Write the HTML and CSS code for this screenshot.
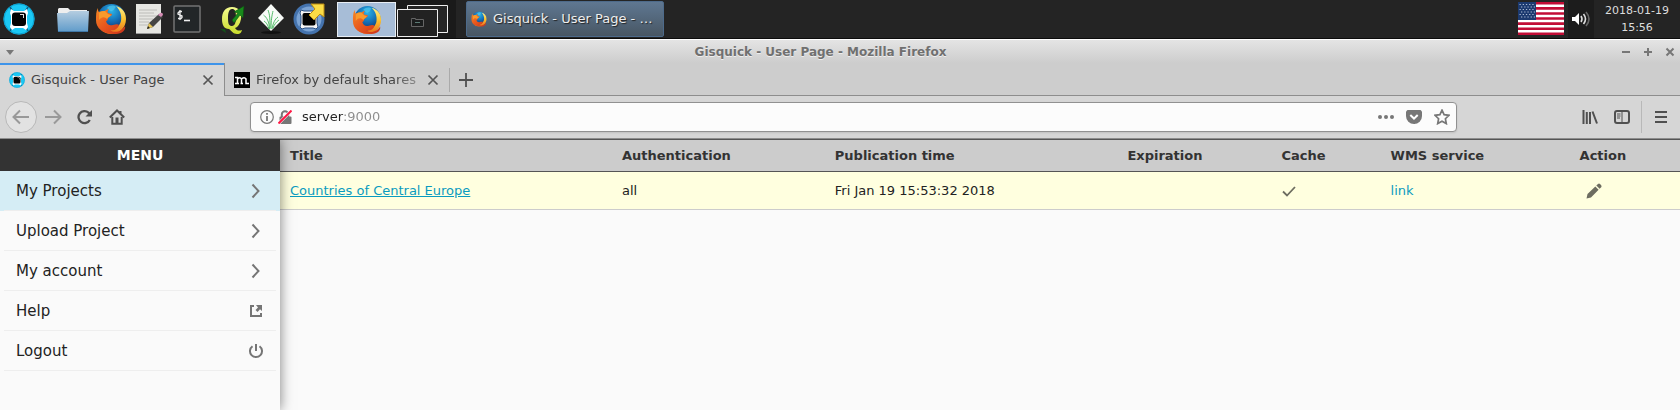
FILE: index.html
```html
<!DOCTYPE html>
<html lang="en">
<head>
<meta charset="utf-8">
<title>Gisquick - User Page</title>
<link rel="stylesheet" href="styles.css">
</head>
<body>
<svg class="defs" width="0" height="0" aria-hidden="true">
  <defs>
    <radialGradient id="globe" cx="0.5" cy="0.25" r="0.7"><stop offset="0" stop-color="#2cb4e6"/><stop offset="0.5" stop-color="#1672b8"/><stop offset="1" stop-color="#0d2f6b"/></radialGradient>
    <linearGradient id="fox" x1="0" y1="0" x2="1" y2="1"><stop offset="0" stop-color="#f58a25"/><stop offset="0.5" stop-color="#e8561d"/><stop offset="1" stop-color="#c8321b"/></linearGradient>
    <linearGradient id="tail" x1="0" y1="0" x2="0" y2="1"><stop offset="0" stop-color="#fff08a"/><stop offset="0.5" stop-color="#fbc02c"/><stop offset="1" stop-color="#ea6a1c"/></linearGradient>
    <linearGradient id="folder" x1="0" y1="0" x2="0" y2="1"><stop offset="0" stop-color="#b5cde0"/><stop offset="1" stop-color="#5f9bca"/></linearGradient>
    <linearGradient id="quill" x1="0" y1="0" x2="0" y2="1"><stop offset="0" stop-color="#f4fb8e"/><stop offset="1" stop-color="#c8dc2c"/></linearGradient>
  </defs>
  <symbol id="firefox" viewBox="0 0 32 32">
    <circle cx="16.500" cy="15" r="14" fill="url(#globe)"/>
    <path d="M12 5c3-3 7-3 9-1-2 1-1 3-4 4s-3-2-5-3z" fill="#4fc8ec" opacity=".7"/>
    <path d="M21 3c7 2 10 7 10 13 0 9-7 15-15 15-4 0-8-2-10-4 9 2 18-1 20-9 1-6-1-11-5-15z" fill="url(#tail)"/>
    <path d="M3 5c0 2 0 3 1 4 2-1 4-1 6-1 1-1 3-2 4-2-1 1-2 3-1 4l4 1c0 2-2 2-4 4 0 2-1 3-2 3 1 4 4 5 7 4s5-1 6 0c-1 4-5 6-9 5 5 4 12 1 15-4 1 4-3 8-9 8C7 31 1 25 1 17c0-5 0-9 2-12z" fill="url(#fox)"/>
    <path d="M4 10c2-2 4-2 6-2l3 3 3 1c-1 2-3 2-4 4-2-2-5-3-8 1z" fill="#f99a2b"/>
  </symbol>
  <symbol id="gisquick" viewBox="0 0 32 32">
    <circle cx="16" cy="16" r="15.500" fill="#1bc9f5"/>
    <circle cx="16" cy="16" r="15" fill="none" stroke="#0a9fd0"/>
    <path d="M7 4l3 5M25 4l-3 5M7 28l3-5M25 28l-3-5" stroke="#0a5f86" stroke-width="1.500"/>
    <path d="M8 6l3 2h10l3-2 1 4-1 3v7l1 4-2 3-3-2H12l-3 2-2-3 1-4v-7l-1-3z" fill="#fff"/>
    <rect x="9" y="9.500" width="14" height="13.500" rx="3" fill="#030303"/>
    <path d="M17 11h4v1h-4zM20 12h1v3h-1z" fill="#ddd"/>
  </symbol>
  <symbol id="close" viewBox="0 0 12 12"><path d="M1.500 1.500l9 9M10.500 1.500l-9 9" stroke="#555" stroke-width="1.700" fill="none"/></symbol>
  <symbol id="chevron" viewBox="0 0 16 16"><path d="M4.500 1.500l6 6.500-6 6.500" stroke="#757575" stroke-width="2" fill="none"/></symbol>
</svg>

<header class="panel">
  <button class="launcher" aria-label="Applications"><svg width="32" height="32"><use href="#gisquick"/></svg></button>
  <span class="gap wide"></span>
  <button class="launcher" aria-label="Files"><svg width="32" height="32" viewBox="0 0 32 32"><path d="M1 10V6l1-1h9l2 2h17v4z" fill="#eee"/><path d="M0 10h10l3-2h19l-1 21H1z" fill="url(#folder)"/><path d="M1 28.500h30" stroke="#3f78a8"/></svg></button>
  <button class="launcher" aria-label="Firefox"><svg width="32" height="32"><use href="#firefox"/></svg></button>
  <button class="launcher" aria-label="Text editor"><svg width="28" height="32" viewBox="0 0 28 32"><path d="M1 1h25v30H1z" fill="#e6e6e2"/><path d="M4 7h18M4 10h15M4 13h18M4 16h14M4 19h10M4 22h9" stroke="#bcbcb8"/><path d="M1 30.500h25" stroke="#999"/><path d="M12 26l2-6 10-9 4 3-10 10z" fill="#454545"/><path d="M12 26l2-6 4 4z" fill="#e7c75a"/><path d="M12 26l1-3 2 2z" fill="#222"/><path d="M23 12l2-2q3-1 3 2l-2 2z" fill="#d58cb5"/></svg></button>
  <button class="launcher" aria-label="Terminal"><svg width="28" height="28" viewBox="0 0 28 28"><rect x="1" y="1" width="26" height="26" rx="1" fill="#222628" stroke="#737373" stroke-width="1.500"/><path d="M9 6.500H6.500L5 8v1l4 2v1.500L8 13.500H5M7 5v10" fill="none" stroke="#eee" stroke-width="1.300"/><path d="M11 15.500h6" stroke="#eee" stroke-width="1.600"/></svg></button>
  <span class="gap"></span>
  <button class="launcher" aria-label="QGIS"><svg width="28" height="32" viewBox="0 0 28 32"><path fill-rule="evenodd" d="M13 4c7 0 10 5 9 12-1 5-3 8-6 9 2 3 4 3 7 2-1 4-3 4-5 4-4 0-5-3-8-5-5 0-7-4-7-10C3 9 6 4 13 4zm0 2c-3 0-4 4-4 9 0 6 1 8 4 8s4-4 4-9c0-6-1-8-4-8z" fill="url(#quill)"/><path d="M1 26l5 0 1 4-3-2z" fill="#14501a"/><path d="M13 17l6-7-4-1 10-6-1 12-3-3-6 8z" fill="#188a1b" stroke="#0b4d10" stroke-width=".6"/></svg></button>
  <button class="launcher" aria-label="GRASS GIS"><svg width="28" height="32" viewBox="0 0 28 32"><ellipse cx="14" cy="29.500" rx="10" ry="1.500" fill="#111"/><path d="M14 1l13 14-13 13L1 15z" fill="#f8fbf8"/><path d="M12.500 26c0-7-3-12-6-14M13 25c0-8 0-13-2-18M14 26c0-9 1-14 2-18M15 26c1-6 3-10 6-12M16 25c1-3 3-6 6-8M12 26c-1-4-3-7-5-8" stroke="#45b45c" stroke-width=".9" fill="none"/></svg></button>
  <button class="launcher" aria-label="Gisquick export"><svg width="32" height="32" viewBox="0 0 32 32"><circle cx="16" cy="16" r="15.500" fill="#4473ae"/><circle cx="16" cy="16" r="12.500" fill="#7aa3d4"/><path d="M8 7l3 1h10l3-1 1 3-1 3v7l1 4-2 2-3-1h-8l-3 1-2-2 1-4v-7l-1-3z" fill="#f6f6f6" stroke="#284d80" stroke-width="1"/><rect x="9.500" y="10" width="13" height="12.500" rx="2" fill="#030303"/><path d="M18 1h13v13l-4-3-6 6-5-5 6-6z" fill="#fbdc46" stroke="#b98b12"/></svg></button>
  <span class="gap"></span>
  <div class="pager">
    <button class="workspace current" aria-label="Workspace 1"><svg width="30" height="32"><use href="#firefox"/></svg></button>
    <button class="workspace" aria-label="Workspace 2"><svg width="58" height="36" viewBox="0 0 58 36"><path d="M11.500 3.500h40v27h-40z" fill="#252525" stroke="#eee"/><path d="M1.500 7.500h40v27h-40z" fill="#222" stroke="#eee"/><path d="M15.500 17.500v-1h4v1h8v7h-12z" fill="#1b1d1d" stroke="#666"/><path d="M19 20.500h5" stroke="#5b7a74"/></svg></button>
  </div>
  <button class="task"><svg width="16" height="16"><use href="#firefox"/></svg><span>Gisquick - User Page - …</span></button>
  <span class="fill"></span>
  <button class="flag" aria-label="Keyboard layout: US"><svg width="46" height="33" viewBox="0 0 46 33"><path fill="#fff" d="M0 0h46v33H0z"/><path d="M0 1.300h46M0 6.400h46M0 11.500h46M0 16.500h46M0 21.600h46M0 26.700h46M0 31.700h46" stroke="#c20d36" stroke-width="2.600"/><path fill="#1c3a70" d="M0 0h18v18H0z"/><path d="M1.500 2.500h16M3 5h14M1.500 7.500h16M3 10h14M1.500 12.500h16M3 15h14" stroke="#a9b9d2" stroke-width="1.100" stroke-dasharray="1.300 1.900"/></svg></button>
  <button class="volume" aria-label="Volume"><svg width="20" height="18" viewBox="0 0 20 18"><path d="M1 7h3l4-4v12l-4-4H1z" fill="#fff"/><path d="M10 6q2 3 0 6M12.500 4q4 5 0 10" stroke="#ddd" stroke-width="1.600" fill="none"/><path d="M15 2q6 7 0 14" stroke="#666" stroke-width="1.600" fill="none"/></svg></button>
  <time class="clock" datetime="2018-01-19T15:56"><span>2018-01-19</span><span>15:56</span></time>
</header>

<div class="titlebar">
  <button class="winmenu" aria-label="Window menu"><svg width="8" height="5" viewBox="0 0 8 5"><path d="M0 0h8L4 5z" fill="#777"/></svg></button>
  <h1>Gisquick - User Page - Mozilla Firefox</h1>
  <div class="winbuttons">
    <button aria-label="Minimize"><svg width="10" height="10" viewBox="0 0 10 10"><path d="M1 5h8" stroke="#777" stroke-width="2"/></svg></button>
    <button aria-label="Maximize"><svg width="10" height="10" viewBox="0 0 10 10"><path d="M1 5h8M5 1v8" stroke="#777" stroke-width="2"/></svg></button>
    <button aria-label="Close window"><svg width="10" height="10" viewBox="0 0 10 10"><path d="M1.500 1.500l7 7M8.500 1.500l-7 7" stroke="#777" stroke-width="2"/></svg></button>
  </div>
</div>

<div class="tabs">
  <div class="tab active"><svg width="16" height="16"><use href="#gisquick"/></svg><span class="tab-label">Gisquick - User Page</span><button aria-label="Close tab"><svg width="12" height="12"><use href="#close"/></svg></button></div>
  <div class="tab"><svg width="16" height="16" viewBox="0 0 16 16"><path d="M0 0h16v16H0z"/><path d="M1 5.500h2.500v5.500M1 11.500h4M3.500 7q2.500-2.500 4 0v4M6.500 11.500H9M7.500 7q3-2.500 4.500 0v4.500h3" fill="none" stroke="#fff" stroke-width="1.500"/></svg><span class="tab-label fade">Firefox by default shares</span><button aria-label="Close tab"><svg width="12" height="12"><use href="#close"/></svg></button></div>
  <div class="newtab"><button aria-label="New tab"><svg width="14" height="14" viewBox="0 0 14 14"><path d="M0 7h14M7 0v14" stroke="#505050" stroke-width="1.800"/></svg></button></div>
</div>

<nav class="toolbar">
  <button class="back" aria-label="Back"><svg width="18" height="16" viewBox="0 0 18 16"><path d="M17 8H2M8 1.500L1.500 8 8 14.500" fill="none" stroke="#999" stroke-width="2"/></svg></button>
  <button class="tool" aria-label="Forward"><svg width="18" height="16" viewBox="0 0 18 16"><path d="M1 8h15M10 1.500L16.500 8 10 14.500" fill="none" stroke="#999" stroke-width="2"/></svg></button>
  <button class="tool" aria-label="Reload"><svg width="16" height="16" viewBox="0 0 16 16"><path d="M12.800 11A6 6 0 1 1 11.500 3.600L13.500 5.500" fill="none" stroke="#505050" stroke-width="2.300"/><path d="M15 1v6.500H8.500z" fill="#505050"/></svg></button>
  <button class="tool" aria-label="Home"><svg width="16" height="16" viewBox="0 0 16 16"><path d="M.8 8.500L8 1.500l7.200 7M11.500 2v3" fill="none" stroke="#505050" stroke-width="2"/><path d="M3.300 8v6.700h9.400V8" fill="none" stroke="#505050" stroke-width="2"/><path d="M6.500 14V8.500h3V14" fill="#505050"/></svg></button>
  <span class="spring"></span>
  <div class="urlbar">
    <svg width="14" height="14" viewBox="0 0 14 14"><circle cx="7" cy="7" r="6.300" fill="none" stroke="#777" stroke-width="1.200"/><path d="M7 6v5M7 3v1.800" stroke="#777" stroke-width="1.800"/></svg>
    <svg width="14" height="14" viewBox="0 0 14 14"><path d="M3.800 7V4.500a3.200 3.200 0 0 1 6.400 0V7" fill="none" stroke="#777" stroke-width="2"/><rect x="1.500" y="6.500" width="12" height="7.500" rx="1" fill="#777"/><path d="M.5 13.500l13-13" stroke="#fff" stroke-width="3"/><path d="M.5 13.500l13-13" stroke="#ff1744" stroke-width="2"/></svg>
    <input type="text" aria-label="Address" value="server:9000">
    <button aria-label="Page actions"><svg width="16" height="16" viewBox="0 0 16 16"><circle cx="2" cy="8" r="2"/><circle cx="8" cy="8" r="2"/><circle cx="14" cy="8" r="2"/></svg></button>
    <button aria-label="Save to Pocket"><svg width="16" height="16" viewBox="0 0 16 16"><path d="M1.500 1h13L16 2.500V7a8 8 0 0 1-16 0V2.500z"/><path d="M4.300 6L8 9.500 11.700 6" fill="none" stroke="#fff" stroke-width="2"/></svg></button>
    <button aria-label="Bookmark"><svg width="16" height="16" viewBox="0 0 16 16"><path d="M8 1.200l2.100 4.500 4.900.6-3.600 3.400.9 4.900L8 12.200l-4.300 2.400.9-4.900L1 6.300l4.900-.6z" fill="none" stroke="#777" stroke-width="1.700"/></svg></button>
  </div>
  <span class="spring"></span>
  <button class="tool" aria-label="Library"><svg width="16" height="16" viewBox="0 0 16 16"><path d="M1.500 1v14M4.800 3v12M8 3v12M10.500 2.500L15 14.500" stroke="#505050" stroke-width="2"/></svg></button>
  <button class="tool" aria-label="Sidebars"><svg width="16" height="16" viewBox="0 0 16 16"><rect x="1" y="2" width="14" height="12" rx="2" fill="none" stroke="#505050" stroke-width="2"/><path d="M8 2v12M3 5h3.500M3 7h3.500M3 9h3" stroke="#505050"/></svg></button>
  <span class="rule"></span>
  <button class="tool" aria-label="Menu"><svg width="12" height="14" viewBox="0 0 12 14"><path d="M0 2h12M0 7h12M0 12h12" stroke="#505050" stroke-width="2"/></svg></button>
</nav>

<div class="page">
  <aside class="sidebar">
    <h2>MENU</h2>
    <ul>
      <li class="selected"><a href="#projects">My Projects<svg width="16" height="16"><use href="#chevron"/></svg></a></li>
      <li><a href="#upload">Upload Project<svg width="16" height="16"><use href="#chevron"/></svg></a></li>
      <li><a href="#account">My account<svg width="16" height="16"><use href="#chevron"/></svg></a></li>
      <li><a href="#help">Help<svg width="16" height="16" viewBox="0 0 16 16"><path d="M6 3H3v10h10v-3" fill="none" stroke="#757575" stroke-width="2"/><path d="M8 2h6v6l-2-1.800L9.500 9 7.500 7 10 4.500z" fill="#757575"/></svg></a></li>
      <li><a href="#logout">Logout<svg width="16" height="16" viewBox="0 0 16 16"><path d="M4.500 3.200a6 6 0 1 0 7 0M8 1v7" fill="none" stroke="#757575" stroke-width="2"/></svg></a></li>
    </ul>
  </aside>
  <main>
    <table>
      <colgroup><col class="c-title"><col class="c-auth"><col class="c-time"><col class="c-exp"><col class="c-cache"><col class="c-wms"><col class="c-action"></colgroup>
      <thead><tr><th>Title</th><th>Authentication</th><th>Publication time</th><th>Expiration</th><th>Cache</th><th>WMS service</th><th>Action</th></tr></thead>
      <tbody><tr>
        <td><a class="project" href="#project">Countries of Central Europe</a></td>
        <td>all</td>
        <td>Fri Jan 19 15:53:32 2018</td>
        <td></td>
        <td><svg width="16" height="16" viewBox="0 0 16 16"><path d="M2 8.500l4 4 8-8.500" fill="none" stroke="#6d6d60" stroke-width="1.800"/></svg></td>
        <td><a href="#wms">link</a></td>
        <td><button class="edit" aria-label="Edit"><svg width="16" height="16" viewBox="0 0 16 16"><path d="M.5 15.500l1-4.500 7.800-7.500 3.300 3.300L5 14.500zM10.300 2.500L12 1q1-.8 2 0l1.200 1.200q.8 1 0 2L13.600 5.800z" fill="#6d6d60"/></svg></button></td>
      </tr></tbody>
    </table>
  </main>
</div>
</body>
</html>
```

FILE: styles.css
```css
* { box-sizing: border-box; }

body {
  margin: 0;
  min-height: 100vh;
  display: flex;
  flex-direction: column;
  background: #fafafa;
  color: #222;
  font: 13px/16px "DejaVu Sans", sans-serif;
}

button {
  display: flex;
  align-items: center;
  justify-content: center;
  padding: 0;
  border: 0;
  background: none;
  color: inherit;
  font: inherit;
}

svg { display: block; flex: none; }
.defs { position: absolute; }

/* Desktop panel */
.panel {
  display: flex;
  height: 39px;
  background: #242424;
  border-bottom: 1px solid #0c0c0c;
}
.launcher { width: 38px; }
.gap { width: 8px; }
.gap.wide { width: 16px; }
.pager { display: flex; padding: 2px 0 1px; background: #1a1a1a; margin: 0 10px 0 1px; }
.workspace { width: 60px; justify-content: flex-start; }
.workspace.current { width: 59px; justify-content: center; background: #a7bdd7; border: 1px solid #e8eef4; }
.task {
  width: 198px;
  margin: 1px 0;
  padding: 0 4px;
  gap: 6px;
  justify-content: flex-start;
  border: 1px solid #4d6a8a;
  border-radius: 2px;
  background: linear-gradient(#5f7791, #53677b 50%, #485663);
  color: #eee;
  text-shadow: 1px 1px 1px #222;
  white-space: nowrap;
}
.fill { flex: 1; }
.flag { align-self: flex-start; margin: 2px 4px 0 0; }
.volume { width: 26px; background: #1c1c1c; }
.clock {
  width: 86px;
  display: flex;
  flex-direction: column;
  align-items: center;
  padding-top: 2px;
  color: #ddd;
  font-size: 11px;
  line-height: 17px;
}

/* Window title */
.titlebar {
  display: flex;
  align-items: center;
  height: 24px;
  padding-top: 1px;
  border-top: 1px solid #fff;
  background: linear-gradient(#e4e4e4, #cdcdcd);
}
.titlebar h1 {
  flex: 1;
  margin: 0;
  text-align: center;
  font-size: 12px;
  line-height: 16px;
  color: #707070;
  text-shadow: 0 1px 0 #eee;
}
.winmenu { width: 20px; }
.winbuttons { display: flex; gap: 12px; padding-right: 5px; }

/* Browser tabs */
.tabs { display: flex; height: 33px; background: #cdcdcd; color: #444; }
.tab {
  display: flex;
  align-items: center;
  width: 224px;
  padding: 0 10px 0 9px;
  box-shadow: inset 0 -1px #8d8d8d;
}
.tab.active {
  width: 225px;
  background: #d6d6d6;
  border-right: 1px solid #8d8d8d;
  box-shadow: inset 0 2px #3e94ea;
}
.tab-label { flex: 1; overflow: hidden; margin: 0 4px 0 6px; white-space: nowrap; }
.tab-label.fade { -webkit-mask-image: linear-gradient(to right, #000 82%, rgba(0, 0, 0, .3)); mask-image: linear-gradient(to right, #000 82%, rgba(0, 0, 0, .3)); }
.newtab { flex: 1; display: flex; align-items: center; box-shadow: inset 0 -1px #8d8d8d; }
.newtab button { height: 24px; padding-left: 9px; border-left: 1px solid #aaa; }

/* Navigation toolbar */
.toolbar {
  display: flex;
  align-items: center;
  height: 43px;
  padding: 0 3px 0 5px;
  background: #d6d6d6;
  border-bottom: 1px solid #8d8d8d;
}
.back { width: 32px; height: 32px; border: 1px solid #b8b8b8; border-radius: 50%; background: #e2e2e2; }
.tool { width: 32px; height: 32px; }
.spring { flex: 0 1 117px; }
.urlbar {
  flex: 1;
  display: flex;
  align-items: center;
  height: 30px;
  padding: 0 2px 0 9px;
  gap: 4px;
  border: 1px solid #919191;
  border-radius: 4px;
  background: #fcfcfc;
  box-shadow: 0 1px 2px rgba(0, 0, 0, .1);
  fill: #777;
}
.urlbar input {
  flex: 1;
  min-width: 0;
  margin: 0;
  padding: 0 0 0 6px;
  border: 0;
  font: inherit;
  color: #222;
  background: linear-gradient(to right, #222 48px, #8c8c8c 48px);
  -webkit-background-clip: text;
  background-clip: text;
  -webkit-text-fill-color: transparent;
}
.urlbar button { width: 24px; height: 24px; }
.rule { width: 1px; height: 32px; margin: 0 3px; background: #b8b8b8; }

/* Page */
.page { flex: 1; display: flex; }
.sidebar {
  position: relative;
  width: 280px;
  background: #fafafa;
  box-shadow: 0 0 12px rgba(0, 0, 0, .5);
  clip-path: inset(0 -20px 0 0);
}
.sidebar h2 {
  margin: 0;
  padding: 8px 0;
  background: #333;
  color: #fff;
  text-align: center;
  font-size: 14px;
  line-height: 16px;
}
.sidebar ul { margin: 0; padding: 0; list-style: none; }
.sidebar li { padding: 0 4px; }
.sidebar li.selected { background: #d5edf5; }
.sidebar a {
  display: flex;
  align-items: center;
  justify-content: space-between;
  height: 40px;
  padding: 0 12px;
  border-bottom: 1px solid #eee;
  color: #222;
  font-size: 15px;
  text-decoration: none;
}
main { flex: 1; min-width: 0; }
table { width: 100%; table-layout: fixed; border-collapse: collapse; }
.c-title { width: 332px; }
.c-auth { width: 15.2%; }
.c-time { width: 20.9%; }
.c-exp { width: 11%; }
.c-cache { width: 7.8%; }
.c-wms { width: 13.5%; }
th {
  height: 32px;
  padding: 0 10px;
  background: #ccc;
  border-top: 1px solid #555;
  border-bottom: 1px solid #555;
  color: #333;
  text-align: left;
}
td { height: 38px; padding: 0 10px; background: #ffffdf; border-bottom: 1px solid #ccc; }
td a { color: #0a9bc0; text-decoration: none; }
td .project { text-decoration: underline; }
.edit { margin-left: 6px; }
```
